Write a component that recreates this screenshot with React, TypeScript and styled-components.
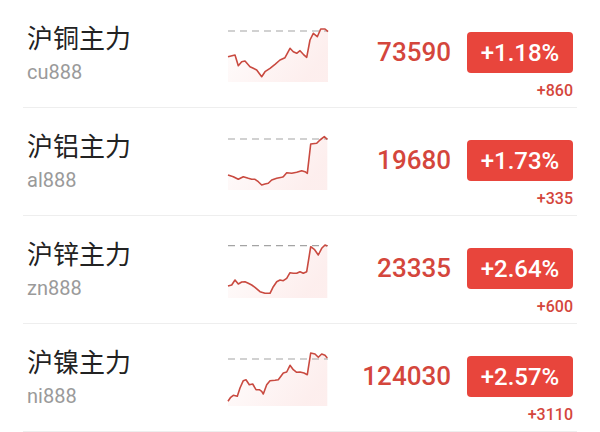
import React from 'react';
import styled, { createGlobalStyle } from 'styled-components';

const GlobalStyle = createGlobalStyle`
  html, body {
    margin: 0;
    padding: 0;
    background: #ffffff;
  }
  body {
    font-family: Roboto, "Noto Sans CJK SC", sans-serif;
  }
`;

const List = styled.div`
  display: flex;
  flex-direction: column;
  width: 600px;
`;

const Row = styled.div`
  display: flex;
  align-items: flex-start;
  height: 107px;
  margin: 0 23px;
  padding: 0 4px;
  border-bottom: 1px solid #eeeeee;
`;

const Info = styled.div`
  display: flex;
  flex-direction: column;
  flex: 0 0 201px;
  padding-top: 21px;
`;

const Name = styled.div`
  font-family: "Noto Sans CJK SC", sans-serif;
  font-size: 26px;
  line-height: 32px;
  color: #222222;
`;

const Code = styled.div`
  margin-top: 7px;
  font-family: Roboto, sans-serif;
  font-size: 20px;
  line-height: 24px;
  color: #9a9a9a;
`;

const ChartBox = styled.svg`
  flex: 0 0 100px;
  height: 56px;
  margin-top: 26px;
  overflow: visible;
`;

const Price = styled.div`
  flex: 1;
  margin-top: 37px;
  text-align: right;
  font-family: Roboto, sans-serif;
  font-size: 26px;
  font-weight: 500;
  line-height: 30px;
  color: #d4463c;
`;

const Quote = styled.div`
  display: flex;
  flex-direction: column;
  align-items: flex-end;
  flex: 0 0 106px;
  margin-left: 16px;
  padding-top: 32px;
`;

const Badge = styled.div`
  display: flex;
  align-items: center;
  justify-content: center;
  width: 106px;
  height: 41px;
  border-radius: 4px;
  background: #e8453c;
  color: #ffffff;
  font-family: Roboto, sans-serif;
  font-size: 24px;
  font-weight: 500;
`;

const Change = styled.div`
  margin-top: 8px;
  font-family: Roboto, sans-serif;
  font-size: 16px;
  font-weight: 500;
  line-height: 20px;
  color: #d4463c;
`;

type Pt = [number, number];

interface Item {
  name: string;
  code: string;
  price: string;
  pct: string;
  diff: string;
  base: number;
  points: Pt[];
}

const items: Item[] = [
  {
    name: '沪铜主力',
    code: 'cu888',
    price: '73590',
    pct: '+1.18%',
    diff: '+860',
    base: 5,
    points: [
      [0, 30.7], [7, 29], [10.3, 39.7], [13.7, 35.7], [17, 35], [22, 40.7], [25.3, 42.3],
      [28.7, 44], [33.7, 50.7], [37, 45.7], [42, 42.3], [47, 38.3], [52, 34], [57, 31.7],
      [62, 22.3], [65.3, 25.7], [68.7, 27.3], [72, 24.7], [75.3, 28.3], [78.7, 31.3],
      [82, 14], [85.3, 7.3], [89.3, 10.7], [92.7, 3], [97, 3], [100, 5.7],
    ],
  },
  {
    name: '沪铝主力',
    code: 'al888',
    price: '19680',
    pct: '+1.73%',
    diff: '+335',
    base: 5,
    points: [
      [0, 41], [5.3, 42.7], [10.3, 45.3], [15.3, 42.7], [20.3, 44.3], [23.7, 45.3], [27, 45.3],
      [30.3, 47.7], [33.7, 51], [37, 50], [40.3, 49.3], [43.7, 46], [48.7, 44.3], [53.7, 43.3],
      [55.3, 42.7], [58.7, 38.7], [63.7, 39.3], [68.7, 38.3], [73.7, 36.7], [77, 37.7],
      [79.3, 39.3], [82.7, 10], [88.7, 9.3], [92, 6], [96.3, 2.7], [99.3, 5.3],
    ],
  },
  {
    name: '沪锌主力',
    code: 'zn888',
    price: '23335',
    pct: '+2.64%',
    diff: '+600',
    base: 3.7,
    points: [
      [0, 44], [3.7, 43], [7, 38], [10.3, 42], [13.7, 40], [17, 39.7], [20.3, 41.3], [23.7, 43],
      [27, 45.3], [32, 49.7], [37, 51.3], [42, 51.3], [45.3, 44.7], [48.7, 39.7], [52, 38],
      [55.3, 38.7], [58.7, 36.3], [62, 30.7], [65.3, 31.3], [68.7, 31.3], [72, 29.7],
      [75.3, 31.3], [78.7, 29.7], [82.7, 4.7], [86.3, 7.3], [90.3, 13], [93.7, 6.3], [97, 3],
      [99.3, 4],
    ],
  },
  {
    name: '沪镍主力',
    code: 'ni888',
    price: '124030',
    pct: '+2.57%',
    diff: '+3110',
    base: 9,
    points: [
      [0, 51.3], [2.7, 47.3], [5.3, 45.3], [9.3, 46.3], [12, 38], [15.3, 30.7], [18, 29.7],
      [21.3, 34.7], [24.7, 34], [28, 39.7], [31.3, 39.7], [33.7, 41.3], [35.3, 44], [38.7, 34.7],
      [42, 30.7], [47, 30.3], [50.3, 29.7], [55.3, 23], [58.7, 22], [62, 15.3], [65.3, 19.7],
      [68.7, 22.3], [72, 22], [76, 23], [79.3, 24.7], [82.7, 3], [87, 4], [90.3, 7.3],
      [93.7, 4], [97, 5.3], [99.3, 8],
    ],
  },
];

const Sparkline: React.FC<{ id: string; points: Pt[]; base: number }> = ({ id, points, base }) => {
  const line = points.map(([x, y]) => `${x},${y}`).join(' ');
  const last = points[points.length - 1];
  const area = `0,56 ${line} ${last[0]},56`;
  return (
    <ChartBox viewBox="0 0 100 56">
      <defs>
        <linearGradient id={id} x1="0" y1="0" x2="1" y2="0.4">
          <stop offset="0" stopColor="#e8453c" stopOpacity="0.01" />
          <stop offset="1" stopColor="#e8453c" stopOpacity="0.09" />
        </linearGradient>
      </defs>
      <polygon points={area} fill={`url(#${id})`} />
      <line x1="0" y1={base} x2="100" y2={base} stroke="#a4a4a4" strokeWidth="1.2" strokeDasharray="7 5" />
      <polyline points={line} fill="none" stroke="#c94a40" strokeWidth="1.6" strokeLinejoin="round" />
    </ChartBox>
  );
};

export default function App() {
  return (
    <>
      <GlobalStyle />
      <List>
        {items.map((it) => (
          <Row key={it.code}>
            <Info>
              <Name>{it.name}</Name>
              <Code>{it.code}</Code>
            </Info>
            <Sparkline id={`g-${it.code}`} points={it.points} base={it.base} />
            <Price>{it.price}</Price>
            <Quote>
              <Badge>{it.pct}</Badge>
              <Change>{it.diff}</Change>
            </Quote>
          </Row>
        ))}
      </List>
    </>
  );
}
